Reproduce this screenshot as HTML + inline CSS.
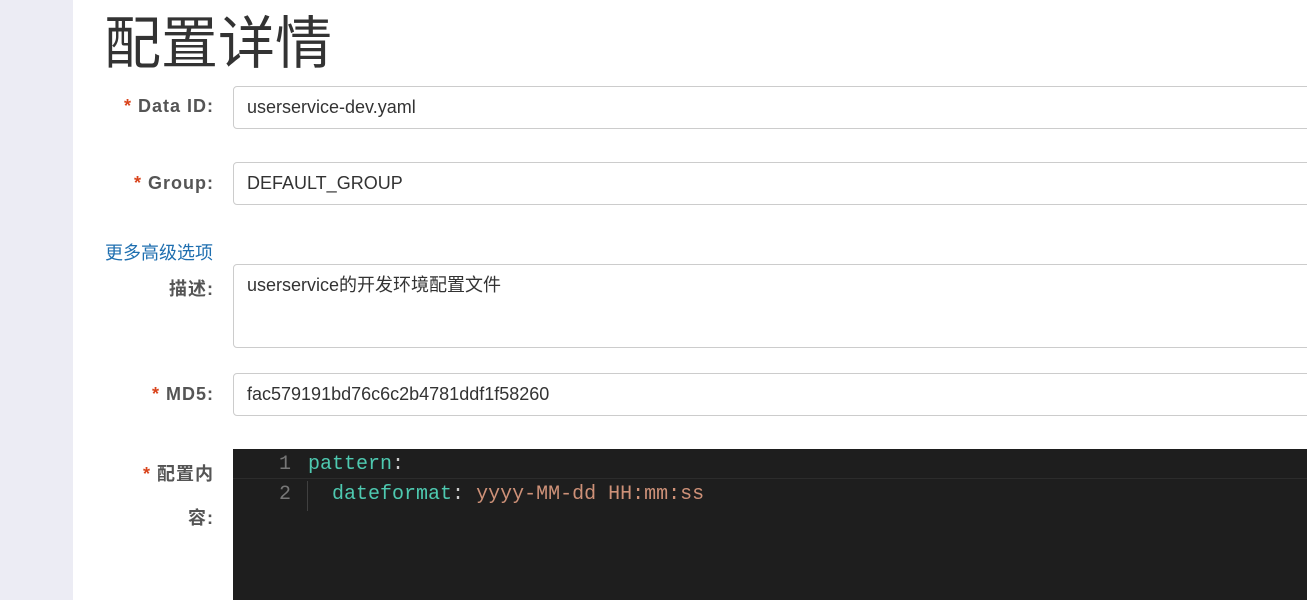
<!DOCTYPE html>
<html><head><meta charset="utf-8"><style>
body{margin:0;width:1307px;height:600px;overflow:hidden;background:#fff;font-family:"Liberation Sans","Noto Sans CJK SC",sans-serif;position:relative}
.side{position:absolute;left:0;top:0;width:73px;height:600px;background:#ececf4}
h1{position:absolute;left:104px;top:3px;margin:0;font-size:57px;font-weight:normal;color:#333;line-height:72px;font-family:"Noto Sans CJK SC",sans-serif}
.lab{position:absolute;right:1093px;font-size:18px;letter-spacing:1px;font-weight:bold;color:#555;white-space:nowrap}
.lab b{color:#d9441c;margin-right:6px}
.inp{position:absolute;left:233px;width:1090px;border:1px solid #ccc;border-radius:4px;box-sizing:border-box;font-size:18px;color:#333;padding-left:13px}
.link{position:absolute;left:105px;top:239px;font-size:18px;color:#1f6fb0}
.ed{position:absolute;left:233px;top:449px;width:1074px;height:151px;background:#1e1e1e;font-family:"Liberation Mono",monospace;font-size:20px}
.ln{position:absolute;left:46px;color:#777}
.cur{position:absolute;left:0;right:0;top:0;height:29px;border-bottom:1px solid #2c2c2c}
.code{position:absolute;left:75px;white-space:pre;color:#ccc}
.k{color:#4ec9b0}.v{color:#ce9178}
</style></head><body>
<div class="side"></div>
<h1>配置详情</h1>
<div class="lab" style="top:96px"><b>*</b>Data ID:</div>
<div class="inp" style="top:86px;height:43px;line-height:41px">userservice-dev.yaml</div>
<div class="lab" style="top:173px"><b>*</b>Group:</div>
<div class="inp" style="top:162px;height:43px;line-height:41px">DEFAULT_GROUP</div>
<div class="link">更多高级选项</div>
<div class="lab" style="top:275px">描述:</div>
<div class="inp" style="top:264px;height:84px;line-height:40px">userservice的开发环境配置文件</div>
<div class="lab" style="top:384px"><b>*</b>MD5:</div>
<div class="inp" style="top:373px;height:43px;line-height:41px">fac579191bd76c6c2b4781ddf1f58260</div>
<div class="lab" style="top:460px"><b>*</b>配置内</div>
<div class="lab" style="top:504px">容:</div>
<div class="ed">
<div class="cur"></div>
<div class="ln" style="top:4px">1</div>
<div class="ln" style="top:34px">2</div>
<div style="position:absolute;left:74px;top:32px;width:1px;height:30px;background:#404040"></div>
<div class="code" style="top:4px"><span class="k">pattern</span>:</div>
<div class="code" style="top:34px">  <span class="k">dateformat</span>: <span class="v">yyyy-MM-dd HH:mm:ss</span></div>
</div>
</body></html>
